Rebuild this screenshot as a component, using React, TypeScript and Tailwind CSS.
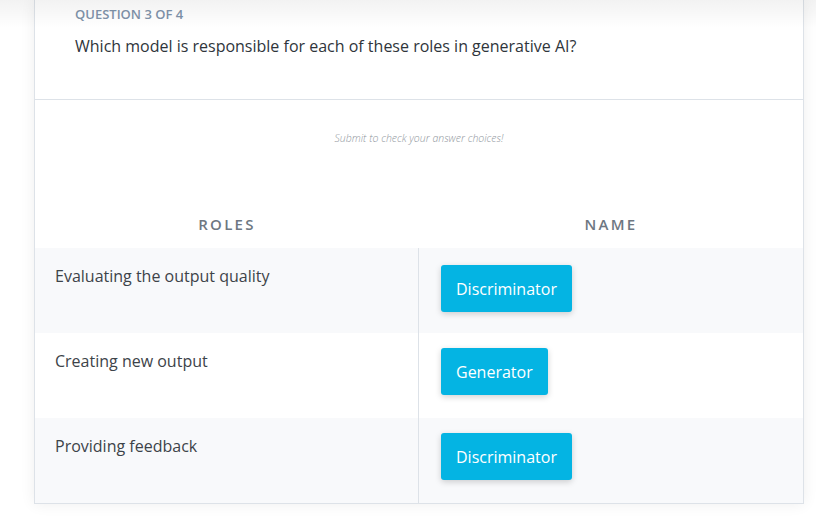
const rows = [
    { role: "Evaluating the output quality", name: "Discriminator", shaded: true, top: "pt-[17px]" },
    { role: "Creating new output", name: "Generator", shaded: false, top: "pt-[15px]" },
    { role: "Providing feedback", name: "Discriminator", shaded: true, top: "pt-[15px]" },
];

export default function App() {
    return (
        <div
            className="relative w-[816px] h-[517px] overflow-hidden bg-white"
            style={{ fontFamily: '"Open Sans", "Noto Sans", sans-serif' }}
        >
            <div className="ml-[34px] w-[770px] bg-white border-x border-b border-[#dde2e8] shadow-[0_0_14px_rgba(0,0,0,0.07)]">
                <div className="h-[100px] border-b border-[#dde2e8] pl-[40px] pt-[5px]">
                    <div className="text-[13px] leading-[18px] font-semibold uppercase text-[#7f93aa]">
                        Question 3 of 4
                    </div>
                    <div className="mt-[11px] text-[16px] leading-[24px] text-[#2f353b]">
                        Which model is responsible for each of these roles in generative AI?
                    </div>
                </div>

                <div className="pt-[31px] text-center text-[10.5px] leading-[14px] italic font-light text-[#8f969d]">
                    Submit to check your answer choices!
                </div>

                <div className="grid grid-cols-2 mt-[69px] pb-[14px] text-[15px] leading-[20px] font-semibold tracking-[0.15em] text-[#6e7782] text-center">
                    <div>ROLES</div>
                    <div>NAME</div>
                </div>

                {rows.map((row, i) => (
                    <div
                        key={i}
                        className={`grid grid-cols-2 h-[85px] ${row.shaded ? "bg-[#f8f9fb]" : "bg-white"}`}
                    >
                        <div className="border-r border-[#dde2e8] pl-[20px] pt-[16px] text-[16px] leading-[24px] text-[#3d4349]">
                            {row.role}
                        </div>
                        <div className={`pl-[22px] ${row.top}`}>
                            <button className="h-[47px] px-[15px] rounded-[3px] bg-[#04b4e3] text-white text-[16px] shadow-[0_2px_6px_rgba(0,0,0,0.18)]">
                                {row.name}
                            </button>
                        </div>
                    </div>
                ))}
            </div>

            <div className="pointer-events-none absolute inset-x-0 top-0 h-[28px] bg-gradient-to-b from-[rgba(0,0,0,0.05)] to-transparent" />
        </div>
    );
}
